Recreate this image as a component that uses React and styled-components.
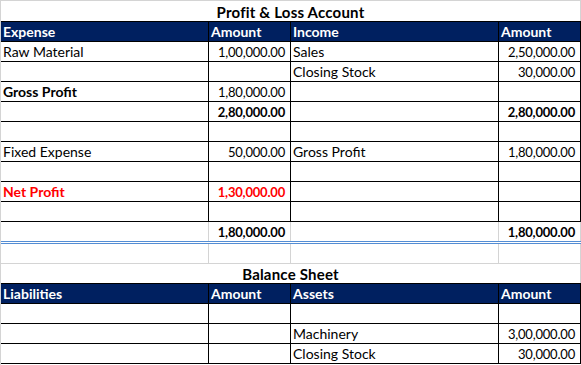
import React from 'react';
import styled, { createGlobalStyle } from 'styled-components';

const GlobalStyle = createGlobalStyle`
  html, body {
    margin: 0;
    padding: 0;
    background: #ffffff;
  }
  body {
    font-family: Lato, "Liberation Sans", sans-serif;
    font-size: 14px;
    color: #000000;
  }
`;

const GRID = '#d4d4d4';
const INK = '#000000';

const Sheet = styled.div`
  width: 581px;
  height: 365px;
  box-sizing: border-box;
  border-top: 1px solid ${GRID};
  border-left: 1px solid ${GRID};
  display: flex;
  flex-direction: column;
  overflow: hidden;
`;

const Row = styled.div`
  display: grid;
  grid-template-columns: 208px 82px 208px 82px;
  flex: 0 0 auto;
  height: ${(p) => p.$h || 20}px;
  box-sizing: border-box;
  border-bottom: ${(p) => p.$bottom || `1px solid ${INK}`};
  background: ${(p) => (p.$head ? '#002060' : '#ffffff')};
  color: ${(p) => (p.$head ? '#ffffff' : INK)};
  font-weight: ${(p) => (p.$head ? 700 : 400)};
`;

const Cell = styled.div`
  box-sizing: border-box;
  display: flex;
  align-items: flex-end;
  justify-content: ${(p) => (p.$right ? 'flex-end' : 'flex-start')};
  padding: 0 ${(p) => (p.$right ? 5 : 2)}px 1px 2px;
  border-right: 1px solid ${(p) => p.$line || INK};
  line-height: 16px;
  white-space: nowrap;
  overflow: hidden;
  font-size: ${(p) => (p.$right ? 13 : 14)}px;
  letter-spacing: ${(p) => (p.$right ? '-0.2px' : 'normal')};
  font-weight: ${(p) => (p.$bold ? 700 : 'inherit')};
  color: ${(p) => (p.$red ? '#ff0000' : 'inherit')};
`;

const Title = styled.div`
  grid-column: 1 / -1;
  box-sizing: border-box;
  display: flex;
  align-items: flex-end;
  justify-content: center;
  padding-bottom: 1px;
  border-right: 1px solid ${GRID};
  line-height: 16px;
  font-size: 15px;
  letter-spacing: 0.2px;
  font-weight: 700;
`;

const plRows = [
  [{ t: 'Raw Material' }, { t: '1,00,000.00' }, { t: 'Sales' }, { t: '2,50,000.00' }],
  [{}, {}, { t: 'Closing Stock' }, { t: '30,000.00' }],
  [{ t: 'Gross Profit', bold: true }, { t: '1,80,000.00' }, {}, {}],
  [{}, { t: '2,80,000.00', bold: true }, {}, { t: '2,80,000.00', bold: true }],
  [{}, {}, {}, {}],
  [{ t: 'Fixed Expense' }, { t: '50,000.00' }, { t: 'Gross Profit' }, { t: '1,80,000.00' }],
  [{}, {}, {}, {}],
  [{ t: 'Net Profit', bold: true, red: true }, { t: '1,30,000.00', bold: true, red: true }, {}, {}],
  [{}, {}, {}, {}],
];

const bsRows = [
  [{}, {}, {}, {}],
  [{}, {}, { t: 'Machinery' }, { t: '3,00,000.00' }],
  [{}, {}, { t: 'Closing Stock' }, { t: '30,000.00' }],
];

const DataRow = ({ cells, line, ...rest }) => (
  <Row {...rest}>
    {cells.map((c, i) => (
      <Cell key={i} $right={i % 2 === 1} $bold={c.bold} $red={c.red} $line={line}>
        {c.t}
      </Cell>
    ))}
  </Row>
);

const HeadRow = ({ labels }) => (
  <Row $head>
    {labels.map((l, i) => (
      <Cell key={i}>{l}</Cell>
    ))}
  </Row>
);

export default function App() {
  return (
    <>
      <GlobalStyle />
      <Sheet>
        <Row $h={21}>
          <Title>Profit &amp; Loss Account</Title>
        </Row>
        <HeadRow labels={['Expense', 'Amount', 'Income', 'Amount']} />
        {plRows.map((r, i) => (
          <DataRow key={i} cells={r} />
        ))}
        <DataRow
          $h={22}
          $bottom="3px double #548dd4"
          line={GRID}
          cells={[{}, { t: '1,80,000.00', bold: true }, {}, { t: '1,80,000.00', bold: true }]}
        />
        <DataRow $bottom={`1px solid ${GRID}`} line={GRID} cells={[{}, {}, {}, {}]} />
        <Row>
          <Title>Balance Sheet</Title>
        </Row>
        <HeadRow labels={['Liabilities', 'Amount', 'Assets', 'Amount']} />
        {bsRows.map((r, i) => (
          <DataRow key={i} cells={r} />
        ))}
      </Sheet>
    </>
  );
}
